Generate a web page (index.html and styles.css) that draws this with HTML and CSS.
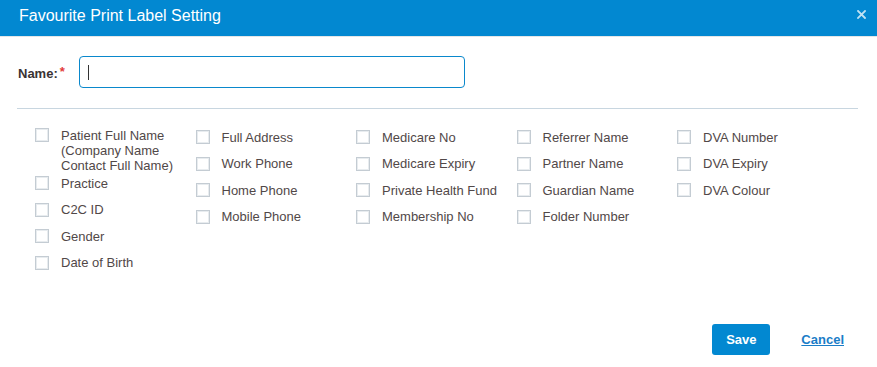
FILE: index.html
```html
<!DOCTYPE html>
<html>
    <head>
        <meta http-equiv="Content-Type" content="text/html; charset=utf-8">
        <title>Favourite Print Label Setting</title>
        <link rel="stylesheet" href="styles.css">
    </head>
    <body>
        <div class="modal">
            <div class="modal-header">
                <h1>Favourite Print Label Setting</h1>
                <svg class="close" width="9" height="9" viewBox="0 0 9 9">
                    <path d="M1 1 L8 8 M8 1 L1 8" stroke="#fff" stroke-width="1.8" stroke-linecap="square"/>
                </svg>
            </div>

            <div class="modal-body">
                <div class="name-row">
                    <label class="name-label">Name:<span class="req">*</span></label>
                    <div class="text-input"><span class="caret"></span></div>
                </div>

                <hr>

                <div class="options">
                    <div class="col">
                        <label class="opt opt-tall"><input type="checkbox"><span>Patient Full Name (Company Name Contact Full Name)</span></label>
                        <label class="opt"><input type="checkbox"><span>Practice</span></label>
                        <label class="opt"><input type="checkbox"><span>C2C ID</span></label>
                        <label class="opt"><input type="checkbox"><span>Gender</span></label>
                        <label class="opt"><input type="checkbox"><span>Date of Birth</span></label>
                    </div>
                    <div class="col">
                        <label class="opt"><input type="checkbox"><span>Full Address</span></label>
                        <label class="opt"><input type="checkbox"><span>Work Phone</span></label>
                        <label class="opt"><input type="checkbox"><span>Home Phone</span></label>
                        <label class="opt"><input type="checkbox"><span>Mobile Phone</span></label>
                    </div>
                    <div class="col">
                        <label class="opt"><input type="checkbox"><span>Medicare No</span></label>
                        <label class="opt"><input type="checkbox"><span>Medicare Expiry</span></label>
                        <label class="opt"><input type="checkbox"><span>Private Health Fund</span></label>
                        <label class="opt"><input type="checkbox"><span>Membership No</span></label>
                    </div>
                    <div class="col">
                        <label class="opt"><input type="checkbox"><span>Referrer Name</span></label>
                        <label class="opt"><input type="checkbox"><span>Partner Name</span></label>
                        <label class="opt"><input type="checkbox"><span>Guardian Name</span></label>
                        <label class="opt"><input type="checkbox"><span>Folder Number</span></label>
                    </div>
                    <div class="col">
                        <label class="opt"><input type="checkbox"><span>DVA Number</span></label>
                        <label class="opt"><input type="checkbox"><span>DVA Expiry</span></label>
                        <label class="opt"><input type="checkbox"><span>DVA Colour</span></label>
                    </div>
                </div>
            </div>

            <div class="modal-footer">
                <button class="btn-save">Save</button>
                <a class="cancel" href="#">Cancel</a>
            </div>
        </div>
    </body>
</html>
```

FILE: styles.css
```css
body {
    margin: 0;
    font-family: "Liberation Sans", Arial, sans-serif;
    font-size: 13px;
    color: #514848;
    background: #fff;
}

.modal {
    min-height: 100vh;
    display: flex;
    flex-direction: column;
}

.modal-header {
    display: flex;
    justify-content: space-between;
    align-items: flex-start;
    padding: 7px 11px 11px 19px;
    background-color: #0288d1;
    border-bottom: 1px solid #e3e6e8;
}

.modal-header h1 {
    margin: 0;
    font-size: 16px;
    line-height: 18px;
    font-weight: normal;
    color: #fff;
}

.close {
    margin-top: 3px;
    opacity: .75;
}

.modal-body {
    flex: 1;
    padding: 19px 19px 0 17px;
}

.name-row {
    display: flex;
    align-items: center;
}

.name-label {
    width: 61px;
    padding-left: 1px;
    font-weight: bold;
    color: #3a3333;
}

.req {
    color: #e23b3b;
    margin-left: 2px;
    vertical-align: 2px;
}

.text-input {
    width: 386px;
    height: 32px;
    box-sizing: border-box;
    border: 1px solid #0a88cc;
    border-radius: 4px;
    display: flex;
    align-items: center;
    padding-left: 8px;
}

.caret {
    width: 1px;
    height: 15px;
    background: #333;
}

hr {
    margin: 20px 0 0 0;
    border: 0;
    border-top: 1px solid #c8d6e0;
}

.options {
    display: grid;
    grid-template-columns: repeat(5, 160.5px);
    margin: 20.5px 0 0 18px;
}

.col {
    display: flex;
    flex-direction: column;
}

.opt {
    display: flex;
    align-items: flex-start;
    gap: 12px;
    line-height: 15px;
    margin-bottom: 11.67px;
}

.opt-tall {
    margin-top: -2px;
    margin-bottom: 3px;
}

.opt input {
    appearance: none;
    -webkit-appearance: none;
    flex: none;
    width: 14px;
    height: 14px;
    margin: 0.5px 0 0 0;
    box-sizing: border-box;
    border: 1px solid #c4ccd3;
    box-shadow: inset 0 0 0 1px #e8ecef;
    background: #fff;
}

.modal-footer {
    display: flex;
    justify-content: flex-end;
    align-items: center;
    gap: 31px;
    padding: 0 33px 12px 0;
}

.btn-save {
    height: 31px;
    width: 58px;
    padding: 0;
    border: 0;
    border-radius: 3px;
    background-color: #0288d1;
    color: #fff;
    font-family: inherit;
    font-size: 13px;
    font-weight: bold;
}

.cancel {
    color: #1a7dc7;
    font-weight: bold;
    text-decoration: underline;
}
```
